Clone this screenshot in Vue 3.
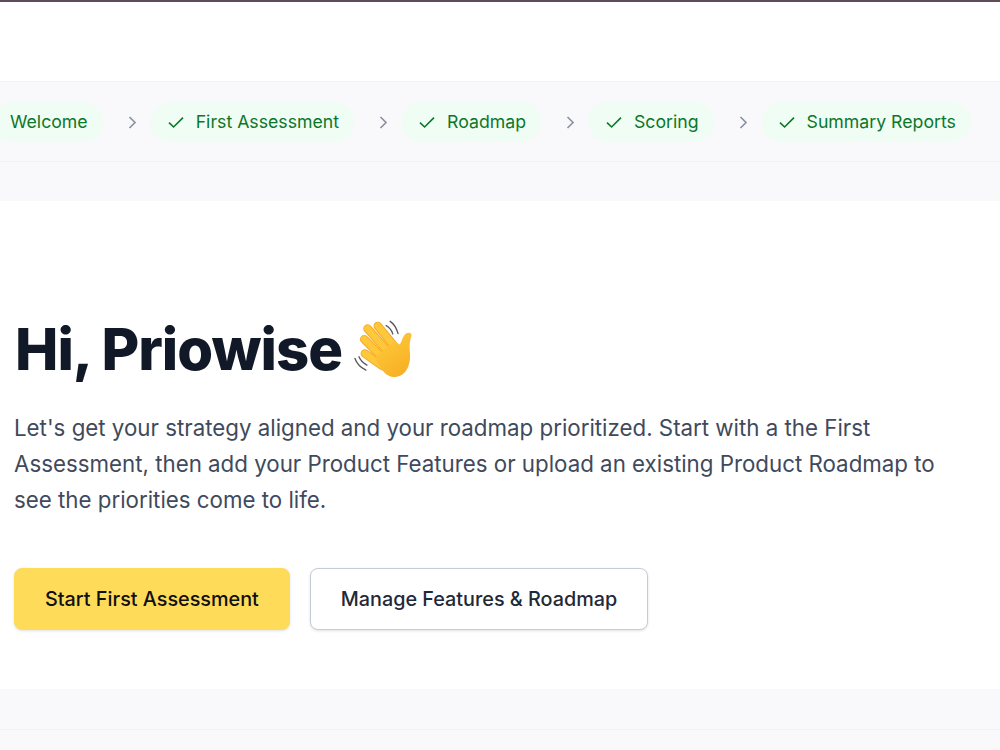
<template>
  <div class="page">
    <div class="topline"></div>
    <header class="header"></header>
    <nav class="stepper">
      <template v-for="(step, i) in steps" :key="step.label">
        <svg v-if="i > 0" class="chevron" viewBox="0 0 20 20" fill="none">
          <path d="M7.5 5 L13 10.5 L7.5 16" stroke="#8b92a5" stroke-width="1.7" />
        </svg>
        <div class="pill">
          <svg v-if="step.done" class="check" viewBox="0 0 16 16" fill="none">
            <path d="M1 8.6 L5.6 13 L15 3.6" stroke="#0c772a" stroke-width="1.6" />
          </svg>
          <span>{{ step.label }}</span>
        </div>
      </template>
    </nav>
    <div class="spacer"></div>
    <main class="hero">
      <h1 class="title">
        Hi, Priowise
        <svg class="wave" viewBox="60 50 190 190" fill="none">
          <defs>
            <linearGradient id="palm" x1="0.2" y1="0" x2="0.8" y2="1">
              <stop offset="0" stop-color="#fdcb3e" />
              <stop offset="1" stop-color="#f8ae22" />
            </linearGradient>
          </defs>
          <g stroke="#55555c" stroke-width="4" stroke-linecap="round">
            <path d="M166 73 Q180 80 186 98" />
            <path d="M178 60 Q194 70 202 97" />
            <path d="M72 172 Q80 195 105 207" />
            <path d="M84 167 Q90 182 108 192" />
          </g>
          <g stroke-linecap="round" stroke="#f5aa25" stroke-width="26">
            <path d="M141 74 L196 142" />
            <path d="M110 82 L170 150" />
            <path d="M100 114 L155 170" />
            <path d="M102 157 L155 195" />
          </g>
          <g stroke-linecap="round" stroke="#fdc83c" stroke-width="20">
            <path d="M141 74 L196 142" />
            <path d="M110 82 L170 150" />
            <path d="M100 114 L155 170" />
            <path d="M102 157 L155 195" />
          </g>
          <path d="M132 170 L190 118 L206 130 C213 124 214 108 224 98 C233 91 246 95 242 106 C235 125 237 140 238 160 C240 200 220 228 190 228 C165 228 150 205 132 170 Z" fill="url(#palm)" />
        </svg>
      </h1>
      <p class="intro">
        Let's get your strategy aligned and your roadmap prioritized. Start with a the First
        Assessment, then add your Product Features or upload an existing Product Roadmap to
        see the priorities come to life.
      </p>
      <div class="actions">
        <button class="btn primary">Start First Assessment</button>
        <button class="btn secondary">Manage Features &amp; Roadmap</button>
      </div>
    </main>
    <div class="spacer last"></div>
    <div class="rest"></div>
  </div>
</template>

<script setup>
const steps = [
  { label: 'Welcome', done: false },
  { label: 'First Assessment', done: true },
  { label: 'Roadmap', done: true },
  { label: 'Scoring', done: true },
  { label: 'Summary Reports', done: true }
]
</script>

<style>
html, body {
  overflow: hidden;
}
</style>

<style scoped>
.page {
  height: 750px;
  overflow: hidden;
  background: #f9f9fb;
  font-family: Inter, "Liberation Sans", sans-serif;
}
.topline {
  height: 2px;
  background: #5d4c59;
}
.header {
  height: 79px;
  background: #fff;
  border-bottom: 1px solid #f1f2f4;
}
.stepper {
  height: 80px;
  box-sizing: border-box;
  border-bottom: 1px solid #f0f1f3;
  display: flex;
  align-items: center;
  margin-left: -8px;
}
.pill {
  height: 40px;
  padding: 0 15px 0 18px;
  border-radius: 20px;
  background: #f0fdf4;
  color: #0c772a;
  font-size: 17.7px;
  font-weight: 400;
  display: flex;
  align-items: center;
  gap: 12px;
  white-space: nowrap;
  flex-shrink: 0;
}
.check {
  width: 16px;
  height: 16px;
}
.chevron {
  width: 20px;
  height: 20px;
  margin: 0 8px 0 19px;
  flex-shrink: 0;
}
.spacer {
  height: 39px;
}
.spacer.last {
  height: 40px;
}
.hero {
  height: 488px;
  box-sizing: border-box;
  background: #fff;
  padding: 112px 14px 0;
}
.title {
  margin: 0;
  display: flex;
  align-items: center;
  gap: 9px;
  height: 72px;
  font-size: 58px;
  font-weight: 800;
  letter-spacing: -1px;
  color: #111827;
  line-height: 72px;
  padding-left: 1px;
}
.wave {
  width: 63px;
  height: 63px;
}
.intro {
  margin: 25px 0 0;
  width: 940px;
  font-size: 22.3px;
  line-height: 36px;
  color: #3f4a5c;
}
.actions {
  margin-top: 50px;
  display: flex;
  gap: 20px;
}
.btn {
  height: 62px;
  padding: 0 30px;
  border-radius: 8px;
  font-family: inherit;
  font-size: 19.8px;
  font-weight: 500;
  white-space: nowrap;
  box-shadow: 0 1px 3px rgba(0, 0, 0, 0.12);
}
.primary {
  background: #fedc5a;
  border: 1px solid #fedc5a;
  color: #0f0f14;
}
.secondary {
  background: #fff;
  border: 1px solid #c5cbd8;
  color: #1f2937;
}
.rest {
  height: 60px;
  border-top: 1px solid #f0f1f3;
}
</style>
